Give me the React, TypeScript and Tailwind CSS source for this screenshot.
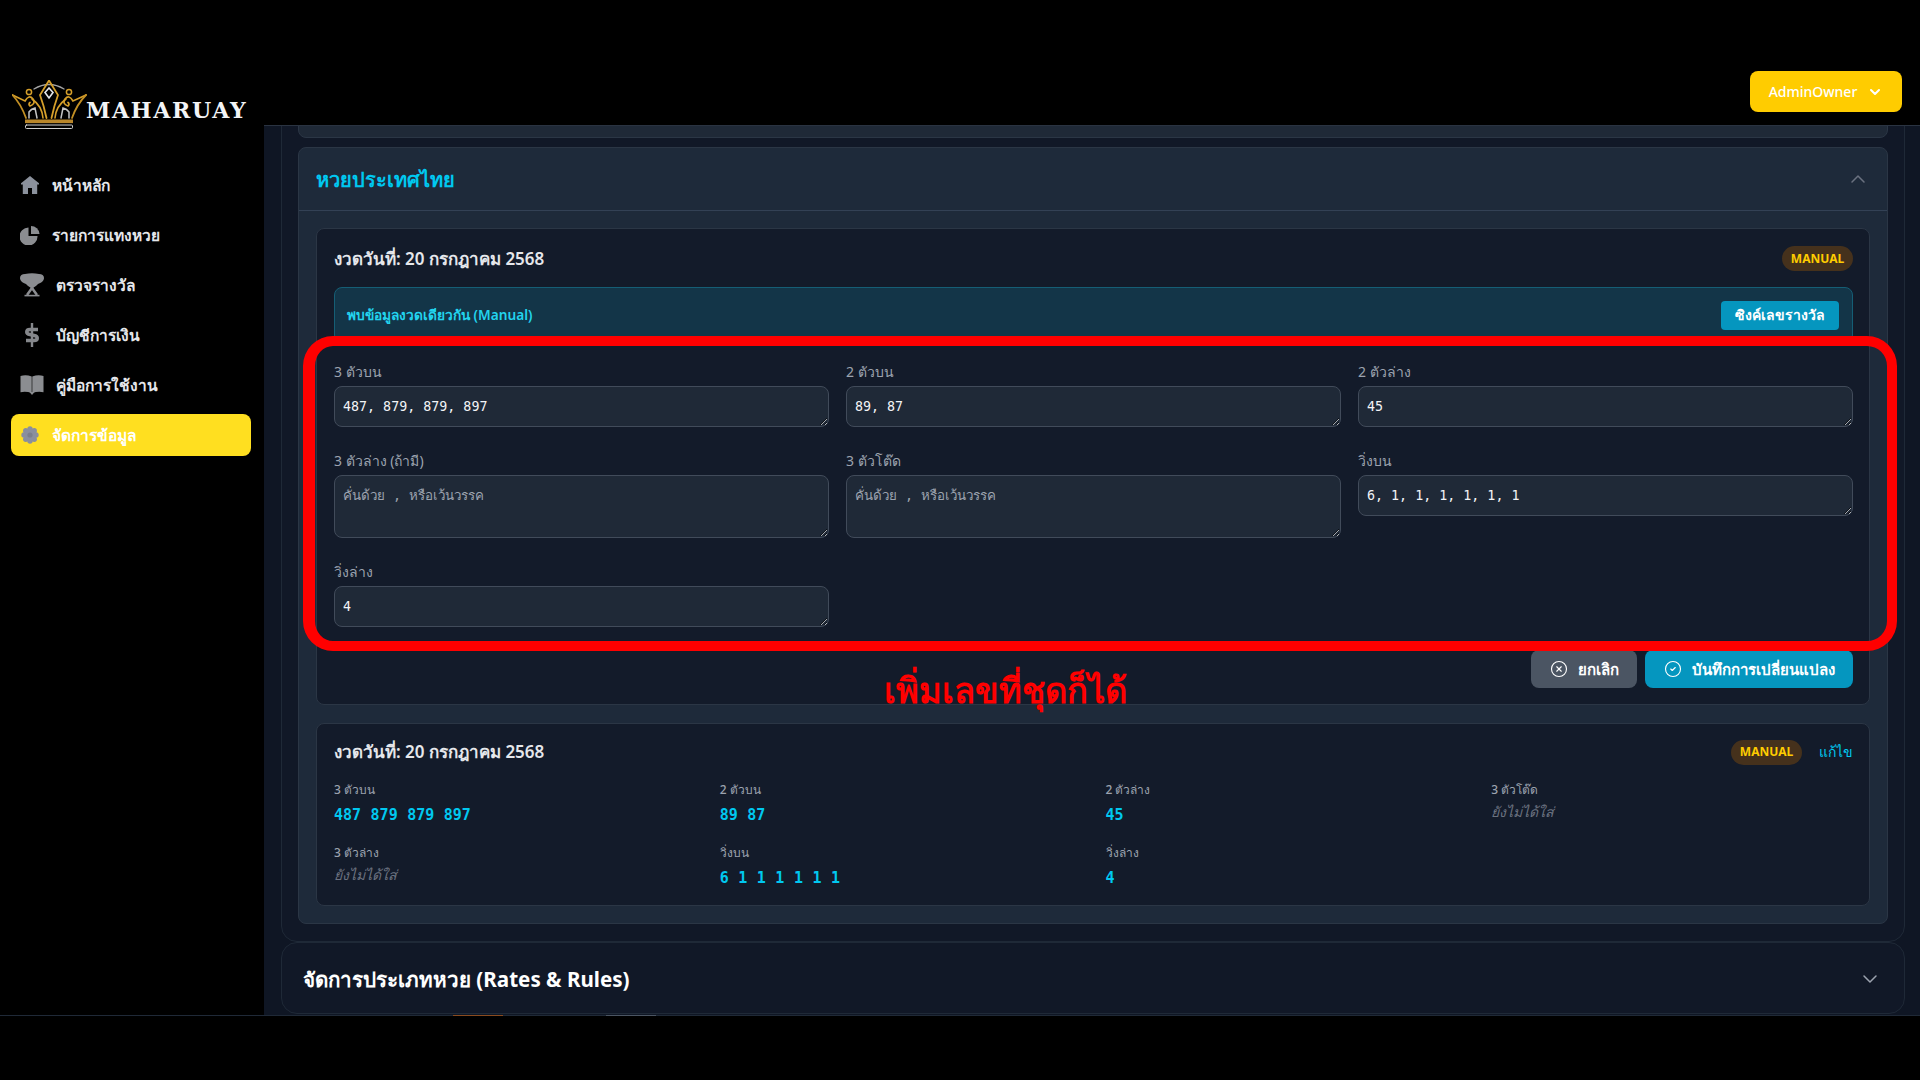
import { useState } from 'react';
import { ChevronDown, ChevronUp, CircleCheck, CircleX } from 'lucide-react';

function HomeIcon() {
  return (
    <svg width="20" height="20" viewBox="-1 -1 20 20" fill="#8b919c">
      <path fillRule="evenodd" d="M9 0 L18 7.2 V8.6 H16.2 V18 H1.8 V8.6 H0 V7.2 Z M7 12 V18 H11 V12 Z" />
    </svg>
  );
}

function PieIcon() {
  return (
    <svg width="20" height="20" viewBox="0 0 20 20" fill="#8b8d91">
      <path d="M8.5 2.5 V11 H17.5 A9 9 0 1 1 8.5 2.5 Z" />
      <path d="M11 1 A8.5 8.5 0 0 1 19.5 9 H11 Z" />
    </svg>
  );
}

function TrophyIcon() {
  return (
    <svg width="24" height="24" viewBox="0 0 24 24" fill="#8b8d91">
      <path d="M5 1 Q12 -0.5 19 1 C22 1 24 2.5 24 5 C24 8 21 10 18 11 C16.5 13 14.5 14 13.5 14.5 V15.5 H10.5 V14.5 C9.5 14 7.5 13 6 11 C3 10 0 8 0 5 C0 2.5 2 1 5 1 Z" />
      <path d="M12 15 L7 22 M12 15 L17 22" stroke="#8b8d91" strokeWidth="2.5" fill="none" />
      <rect x="4.5" y="21.8" width="15" height="1.6" />
    </svg>
  );
}

function DollarIcon() {
  return (
    <svg width="24" height="24" viewBox="-5 0 24 24" fill="none" stroke="#85878b">
      <path d="M13 6.5 H5 Q1.8 6.5 1.8 9 Q1.8 11 5 11.6 L9 12.4 Q12.2 13 12.2 15 Q12.2 17.5 9 17.5 H1" strokeWidth="3.6" />
      <path d="M7 0 V24" strokeWidth="2.4" />
    </svg>
  );
}

function BookIcon() {
  return (
    <svg width="24" height="24" viewBox="0 0 24 24" fill="#8b8d91">
      <path d="M0.5 3 Q6 1.5 11.7 3.5 V20 Q6 18 0.5 19.2 Z" />
      <path d="M23.5 3 Q18 1.5 12.3 3.5 V20 Q18 18 23.5 19.2 Z" />
      <path d="M9.5 19 H14.5 L12 22 Z" />
    </svg>
  );
}

function GearIcon() {
  const lobes = [0, 45, 90, 135, 180, 225, 270, 315];
  return (
    <svg width="20" height="20" viewBox="-10 -10 20 20" fill="#8a8f9e">
      {lobes.map((deg) => (
        <circle key={deg} cx={6 * Math.cos((deg * Math.PI) / 180)} cy={6 * Math.sin((deg * Math.PI) / 180)} r="2.7" />
      ))}
      <circle r="6.5" />
      <circle r="2.6" fill="#7b7f8c" />
    </svg>
  );
}

const navItems = [
  { label: 'หน้าหลัก', icon: HomeIcon },
  { label: 'รายการแทงหวย', icon: PieIcon },
  { label: 'ตรวจรางวัล', icon: TrophyIcon },
  { label: 'บัญชีการเงิน', icon: DollarIcon },
  { label: 'คู่มือการใช้งาน', icon: BookIcon },
  { label: 'จัดการข้อมูล', icon: GearIcon, active: true },
];

const fields = [
  { label: '3 ตัวบน', value: '487, 879, 879, 897', height: 'h-[41px]' },
  { label: '2 ตัวบน', value: '89, 87', height: 'h-[41px]' },
  { label: '2 ตัวล่าง', value: '45', height: 'h-[41px]' },
  { label: '3 ตัวล่าง (ถ้ามี)', value: '', height: 'h-[63px]' },
  { label: '3 ตัวโต๊ด', value: '', height: 'h-[63px]' },
  { label: 'วิ่งบน', value: '6, 1, 1, 1, 1, 1, 1', height: 'h-[41px]' },
  { label: 'วิ่งล่าง', value: '4', height: 'h-[41px]' },
];

const results = [
  { label: '3 ตัวบน', numbers: ['487', '879', '879', '897'] },
  { label: '2 ตัวบน', numbers: ['89', '87'] },
  { label: '2 ตัวล่าง', numbers: ['45'] },
  { label: '3 ตัวโต๊ด', numbers: [] },
  { label: '3 ตัวล่าง', numbers: [] },
  { label: 'วิ่งบน', numbers: ['6', '1', '1', '1', '1', '1', '1'] },
  { label: 'วิ่งล่าง', numbers: ['4'] },
];

function CrownLogo() {
  return (
    <svg width="75" height="50" viewBox="0 0 75 50" fill="none" strokeLinecap="round">
      <path d="M22 9 Q37 0 52 9" stroke="#a3a3a3" strokeWidth="1.4" />
      <path d="M37 0.5 L46 15 Q42 26 39.5 38 M37 0.5 L28 15 Q32 26 34.5 38" stroke="#d59f2a" strokeWidth="1.8" />
      <path d="M37 8 L41 12.5 L37 18 L33 12.5 Z" stroke="#e5e7eb" strokeWidth="1.6" />
      <circle cx="17" cy="12" r="2.6" stroke="#d59f2a" strokeWidth="1.5" />
      <circle cx="57" cy="12" r="2.6" stroke="#d59f2a" strokeWidth="1.5" />
      <path d="M0.5 15 L13 21 Q17 14 21 19 Q24 24 18 26 Q16 24 18 22.5 M74 15 L61 21 Q57 14 53 19 Q50 24 56 26 Q58 24 56 22.5" stroke="#d59f2a" strokeWidth="1.7" />
      <path d="M0.5 15 Q9 24 14 38 M74 15 Q65 24 60 38" stroke="#c28f24" strokeWidth="1.8" />
      <path d="M31 38 Q30 26 20 19 M43 38 Q44 26 54 19" stroke="#d59f2a" strokeWidth="1.6" />
      <path d="M17 38 V32 Q19 29 23 28 L25 38 M57 38 V32 Q55 29 51 28 L49 38" stroke="#c4c4c4" strokeWidth="1.5" />
      <rect x="13" y="39.5" width="48" height="3.6" fill="#b8862a" />
      <rect x="13.5" y="45" width="47" height="3.5" rx="1" stroke="#cfcfcf" strokeWidth="1" />
    </svg>
  );
}

function ManualBadge({ className = '' }: { className?: string }) {
  return (
    <span className={`flex h-[25px] w-[71px] items-center justify-center rounded-full bg-[#45311c] text-xs font-bold text-[#ffcc00] ${className}`}>
      MANUAL
    </span>
  );
}

export default function App() {
  const [expanded] = useState(true);

  return (
    <div className="flex h-[1080px] w-[1920px] flex-col overflow-hidden bg-black font-['Noto_Sans','Inter',sans-serif]">
      <div className="flex h-[1016px] border-b border-[#1f2937]">
        <aside className="flex w-[264px] shrink-0 flex-col">
          <div className="flex h-[125px] items-end pl-3">
            <div className="mb-[-5px] flex items-end">
              <CrownLogo />
              <span className="mb-2 -ml-px font-['DejaVu_Serif',serif] text-[22px] leading-6 font-bold tracking-[1.7px] text-[#f3f4f6]">
                MAHARUAY
              </span>
            </div>
          </div>
          <nav className="mt-[39px] flex flex-col gap-2 pr-[13px] pl-[11px]">
            {navItems.map((item) => (
              <div
                key={item.label}
                className={`flex h-[42px] items-center gap-3 rounded-lg pl-[9px] text-[15.5px] font-semibold text-[#e5e7eb] ${
                  item.active ? 'bg-[#ffdf20] text-white' : ''
                }`}
              >
                <item.icon />
                <span className="pt-[2px]">{item.label}</span>
              </div>
            ))}
          </nav>
        </aside>

        <div className="flex min-w-0 flex-1 flex-col">
          <header className="flex h-[126px] shrink-0 items-start justify-end border-b border-[#2a3341] pt-[71px] pr-[18px]">
            <button className="flex h-[41px] w-[152px] items-center justify-center gap-2.5 rounded-lg bg-[#ffcc00] text-sm font-medium text-white">
              AdminOwner
              <ChevronDown className="h-4 w-4" strokeWidth={3} />
            </button>
          </header>

          <main className="min-h-0 flex-1 overflow-hidden bg-[#0f1624] pr-[15px] pl-[17px]">
            <div className="-mt-[41px] rounded-2xl border border-[#1f2937] bg-[#111827] px-4 pb-[17px]">
              <div className="h-[52px] rounded-b-lg border border-[#2b3645] bg-[#1f2937]" />

              <section className="mt-[9px] overflow-hidden rounded-lg border border-[#2b3645] bg-[#1e2a3a]">
                <div className="flex h-[63px] items-center justify-between border-b border-[#334155] px-[17px]">
                  <h2 className="pt-px text-xl font-bold text-[#00c8f0]">หวยประเทศไทย</h2>
                  {expanded && <ChevronUp className="h-6 w-6 text-[#6b7280]" strokeWidth={1.5} />}
                </div>

                <div className="flex flex-col gap-[18px] px-[17px] py-[17px]">
                  <div className="rounded-lg border border-[#2b3645] bg-[#131b2a] pt-4 pr-4 pb-4 pl-[17px]">
                    <div className="flex h-[25px] items-center justify-between">
                      <h3 className="pt-[2px] text-[17px] font-semibold text-[#e5e7eb]">งวดวันที่: 20 กรกฎาคม 2568</h3>
                      <ManualBadge className="mt-[2px]" />
                    </div>

                    <div className="mt-[17px] flex h-[56px] items-center justify-between rounded-lg border border-[#155e75] bg-[#133548] pr-[13px] pl-3">
                      <span className="text-[13.7px] font-semibold text-[#22d3ee]">พบข้อมูลงวดเดียวกัน (Manual)</span>
                      <button className="h-[29px] w-[118px] rounded bg-[#0596bf] text-sm font-semibold text-white">
                        ซิงค์เลขรางวัล
                      </button>
                    </div>

                    <div className="mt-[19px] grid grid-cols-3 items-start gap-x-[17px] gap-y-6">
                      {fields.map((field) => (
                        <div key={field.label}>
                          <label className="mb-1 block text-sm leading-5 text-[#9ca3af]">{field.label}</label>
                          <textarea
                            readOnly
                            value={field.value}
                            placeholder="คั่นด้วย , หรือเว้นวรรค"
                            className={`${field.height} block w-full rounded-lg border border-[#414b5a] bg-[#1f2937] px-2 pt-[9px] pb-2 font-['DejaVu_Sans_Mono',monospace] text-[13.33px] leading-[22px] text-[#f3f4f6] placeholder:text-[#9ca3af] focus:outline-none`}
                          />
                        </div>
                      ))}
                    </div>

                    <div className="mt-[23px] flex justify-end gap-2">
                      <button className="flex h-[38px] w-[106px] items-center justify-center gap-2.5 rounded-lg bg-[#4b5563] text-[15px] font-semibold text-white">
                        <CircleX className="h-[18px] w-[18px]" strokeWidth={1.5} />
                        ยกเลิก
                      </button>
                      <button className="flex h-[38px] w-[208px] items-center justify-center gap-2.5 rounded-lg bg-[#0596bf] text-[15px] font-semibold text-white">
                        <CircleCheck className="h-[18px] w-[18px]" strokeWidth={1.5} />
                        บันทึกการเปลี่ยนแปลง
                      </button>
                    </div>
                  </div>

                  <div className="h-[183px] rounded-lg border border-[#2b3645] bg-[#131b2a] pt-[15px] pr-4 pl-[17px]">
                    <div className="flex h-[26px] items-center justify-between">
                      <h3 className="text-[17px] font-semibold text-[#e5e7eb]">งวดวันที่: 20 กรกฎาคม 2568</h3>
                      <div className="flex items-center gap-[17px]">
                        <ManualBadge />
                        <span className="text-sm font-medium text-[#00c8f0]">แก้ไข</span>
                      </div>
                    </div>
                    <div className="mt-[15px] grid grid-cols-4 gap-x-6 gap-y-[17px]">
                      {results.map((result) => (
                        <div key={result.label} className="h-[46px]">
                          <p className="text-xs leading-5 font-medium text-[#9ca3af]">{result.label}</p>
                          {result.numbers.length > 0 ? (
                            <div className="mt-[3px] flex gap-[9.5px] font-['DejaVu_Sans_Mono',monospace] text-[15px] leading-6 font-bold text-[#00c8f0]">
                              {result.numbers.map((n, i) => (
                                <span key={i}>{n}</span>
                              ))}
                            </div>
                          ) : (
                            <p className="mt-[2px] text-sm leading-5 text-[#6b7280] italic">ยังไม่ได้ใส่</p>
                          )}
                        </div>
                      ))}
                    </div>
                  </div>
                </div>
              </section>
            </div>

            <div className="flex h-[72px] items-center justify-between rounded-2xl border border-[#1f2937] bg-[#111827] pt-[2px] pr-[22px] pl-[21px]">
              <h2 className="text-[20.6px] font-bold text-white">จัดการประเภทหวย (Rates &amp; Rules)</h2>
              <ChevronDown className="h-6 w-6 text-[#9ca3af]" strokeWidth={1.5} />
            </div>
          </main>
        </div>
      </div>

      {/* annotation drawn over the screenshot */}
      <div className="pointer-events-none absolute top-[336px] left-[303px] h-[315px] w-[1594px] rounded-[30px] border-[10px] border-l-[12px] border-[#ff0000]" />
      <div className="pointer-events-none absolute top-[665px] left-[884px] text-[34.5px] leading-[50px] font-bold text-[#ff0000]">
        เพิ่มเลขที่ชุดก็ได้
      </div>
      {/* tops of the badges cut off by the bottom edge of the capture */}
      <div className="absolute top-[1015px] left-[453px] h-px w-[50px] bg-[#8a4b1f]" />
      <div className="absolute top-[1015px] left-[606px] h-px w-[50px] bg-[#4b5563]" />
    </div>
  );
}
